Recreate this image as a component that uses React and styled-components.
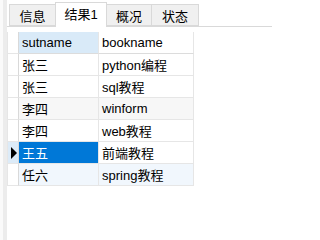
import React from 'react'
import styled, { createGlobalStyle } from 'styled-components'

const Global = createGlobalStyle`
  html, body {
    margin: 0;
    background: #fff;
  }
  body {
    font-family: "Liberation Sans", "Noto Sans CJK SC", sans-serif;
    font-size: 13px;
    color: #000;
  }
`

const Page = styled.div`
  display: flex;
  width: 272px;
  min-height: 203px;
  height: 100vh;
  overflow: hidden;
`

const Gutter = styled.div`
  width: 4px;
  border-left: 3px solid #fafafa;
  background: #ececec;
`

const Main = styled.div`
  flex: 1;
  display: flex;
  flex-direction: column;
`

const TabBar = styled.div`
  display: flex;
  align-items: flex-end;
  height: 26px;
  padding-left: 3px;
  border-bottom: 1px solid #d9d9d9;
`

const Tab = styled.div`
  box-sizing: border-box;
  display: flex;
  align-items: center;
  justify-content: center;
  width: ${p => p.$w}px;
  height: ${p => (p.$active ? 25 : 22)}px;
  margin-bottom: ${p => (p.$active ? -1 : 0)}px;
  margin-left: -1px;
  background: ${p => (p.$active ? '#fff' : '#f0f0f0')};
  border: 1px solid #d9d9d9;
  border-bottom: ${p => (p.$active ? 'none' : '1px solid #d9d9d9')};
  font-family: "Liberation Sans", "Noto Sans CJK SC", sans-serif;
  font-size: 13px;
  padding-bottom: ${p => (p.$active ? 3 : 0)}px;
  position: relative;
  z-index: ${p => (p.$active ? 1 : 0)};
`

const Grid = styled.div`
  display: grid;
  grid-template-columns: 12px 80px 95px;
  grid-auto-rows: 22px;
  margin-top: 5px;
  width: max-content;
`

const Cell = styled.div`
  box-sizing: border-box;
  display: flex;
  align-items: center;
  padding-left: 3px;
  border-right: 1px solid #e6e6e6;
  border-bottom: 1px solid #e6e6e6;
  background: ${p => p.$bg || 'transparent'};
  color: ${p => (p.$sel ? '#fff' : '#000')};
  white-space: nowrap;
`

const Marker = styled.div`
  box-sizing: border-box;
  display: flex;
  align-items: center;
  border-left: 1px solid #e6e6e6;
  border-right: 1px solid #d9d9d9;
  border-bottom: 1px solid #e6e6e6;
  padding-left: 3px;
  background: ${p => (p.$sel ? '#dcebf8' : '#fff')};
`

const Arrow = styled.span`
  width: 0;
  height: 0;
  border-top: 6px solid transparent;
  border-bottom: 6px solid transparent;
  border-left: 6px solid #000;
`

const HeadCell = styled(Cell)`
  background: ${p => (p.$sorted ? '#d9eaf8' : '#fff')};
  border-bottom-color: #dcdcdc;
`

const tabs = [
  { label: '信息', w: 47 },
  { label: '结果1', w: 52, active: true },
  { label: '概况', w: 46 },
  { label: '状态', w: 48 },
]

const rows = [
  { name: '张三', book: 'python编程' },
  { name: '张三', book: 'sql教程' },
  { name: '李四', book: 'winform', bg: '#f7f7f7' },
  { name: '李四', book: 'web教程' },
  { name: '王五', book: '前端教程', selected: true },
  { name: '任六', book: 'spring教程', bg: '#f1f7fd' },
]

export default function App() {
  return (
    <Page>
      <Global />
      <Gutter />
      <Main>
        <TabBar>
          {tabs.map(t => (
            <Tab key={t.label} $w={t.w} $active={t.active}>{t.label}</Tab>
          ))}
        </TabBar>
        <Grid>
          <Marker />
          <HeadCell $sorted>sutname</HeadCell>
          <HeadCell>bookname</HeadCell>
          {rows.map((r, i) => (
            <React.Fragment key={i}>
              <Marker $sel={r.selected}>{r.selected && <Arrow />}</Marker>
              <Cell $bg={r.selected ? '#0078d7' : r.bg} $sel={r.selected}>{r.name}</Cell>
              <Cell $bg={r.selected ? '#fff' : r.bg}>{r.book}</Cell>
            </React.Fragment>
          ))}
        </Grid>
      </Main>
    </Page>
  )
}
